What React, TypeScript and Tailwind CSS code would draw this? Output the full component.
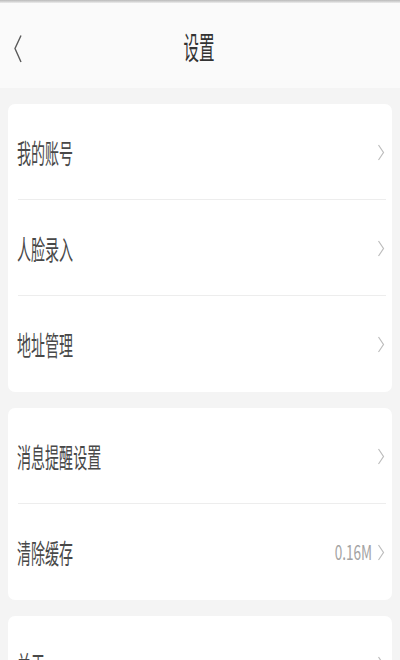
import React from "react";

const font = { fontFamily: '"Noto Sans CJK SC", "Noto Sans", sans-serif' };

function Chevron() {
  return (
    <svg width="8" height="17" viewBox="0 0 8 17" className="shrink-0">
      <path d="M1.5 1 L6.5 8.5 L1.5 16" fill="none" stroke="#bdbdbd" strokeWidth="1.2" />
    </svg>
  );
}

function Row({ label, value, divider }: { label: string; value?: string; divider?: boolean }) {
  return (
    <div className="relative flex h-[96px] items-center pl-[9px] pr-[7px]">
      <span className="inline-block origin-left scale-x-[0.52] whitespace-nowrap text-[27px] leading-none text-[#484848]">
        {label}
      </span>
      <div className="ml-auto flex items-center">
        {value && (
          <span className="mr-[5px] inline-block origin-right scale-x-[0.68] whitespace-nowrap text-[20px] leading-none text-[#a3a3a3]">
            {value}
          </span>
        )}
        <Chevron />
      </div>
      {divider && <div className="absolute bottom-0 left-[10px] right-[6px] h-px bg-[#ededed]" />}
    </div>
  );
}

export default function App() {
  return (
    <div className="h-[660px] w-[400px] overflow-hidden bg-[#f4f4f4]" style={font}>
      <div className="h-[3px] bg-gradient-to-b from-[#b9b9b9] to-[#ececec]" />
      <div className="relative flex h-[85px] items-center justify-center bg-[#fafafa]">
        <svg width="10" height="30" viewBox="0 0 10 30" className="absolute left-[13px] top-[31px]">
          <path d="M8 1.5 L2 14.5 L8 28" fill="none" stroke="#5a5a5a" strokeWidth="1.4" />
        </svg>
        <span className="inline-block -translate-x-[1px] scale-x-[0.5] whitespace-nowrap text-[31px] leading-none text-[#333]">设置</span>
      </div>
      <div className="flex flex-col gap-[16px] px-[8px] pt-[16px]">
        <div className="rounded-[7px] bg-white">
          <Row label="我的账号" divider />
          <Row label="人脸录入" divider />
          <Row label="地址管理" />
        </div>
        <div className="rounded-[7px] bg-white">
          <Row label="消息提醒设置" divider />
          <Row label="清除缓存" value="0.16M" />
        </div>
        <div className="rounded-[7px] bg-white">
          <Row label="关于" />
        </div>
      </div>
    </div>
  );
}
